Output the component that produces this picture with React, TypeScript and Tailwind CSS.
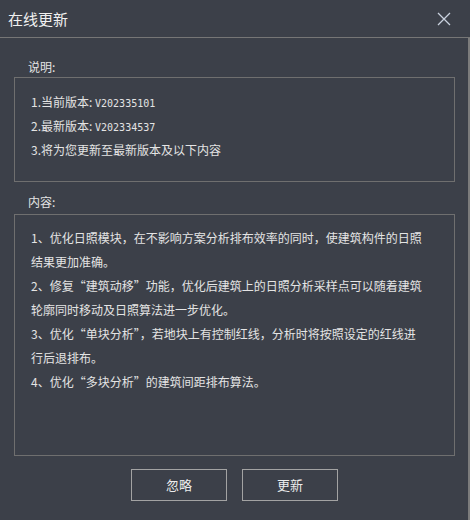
import React from "react";

const contentLines = [
  "1、优化日照模块，在不影响方案分析排布效率的同时，使建筑构件的日照",
  "结果更加准确。",
  "2、修复“建筑动移”功能，优化后建筑上的日照分析采样点可以随着建筑",
  "轮廓同时移动及日照算法进一步优化。",
  "3、优化“单块分析”，若地块上有控制红线，分析时将按照设定的红线进",
  "行后退排布。",
  "4、优化“多块分析”的建筑间距排布算法。",
];

function Mono({ children }: { children: React.ReactNode }) {
  return <span className="font-['DejaVu_Sans_Mono',monospace] text-[10px] leading-none">{children}</span>;
}

export default function App() {
  return (
    <div className="w-[470px] h-[520px] bg-[#3c4049] flex flex-col font-['Noto_Sans_CJK_SC',sans-serif] text-[#e4e4e4] overflow-hidden">
      <div className="h-[38px] shrink-0 border-b border-[#767676] flex items-center justify-between pl-[8px] pr-[19px]">
        <span className="text-[15px] leading-none text-[#f0f0f0]">在线更新</span>
        <svg width="14" height="14" viewBox="0 0 14 14" className="text-[#c9d1de]">
          <path d="M1 1 L13 13 M13 1 L1 13" stroke="currentColor" strokeWidth="1.3" fill="none" />
        </svg>
      </div>
      <div className="flex-1 flex flex-col pl-[14px] pr-[13px] border-r-2 border-[#7c7c7c]">
        <div className="mt-[19px] h-[20px] leading-[20px] pl-[14px] text-[12px]">说明:</div>
        <div className="h-[105px] border border-[#6f6f6f] pt-[12px] pl-[16px] text-[12px] leading-[24px]">
          <div className="h-[24px]">1.当前版本: <Mono>V202335101</Mono></div>
          <div className="h-[24px]">2.最新版本: <Mono>V202334537</Mono></div>
          <div className="h-[24px]">3.将为您更新至最新版本及以下内容</div>
        </div>
        <div className="mt-[10px] h-[20px] leading-[20px] pl-[14px] text-[12px]">内容:</div>
        <div className="mt-[2px] h-[242px] border border-[#6f6f6f] pt-[11px] pl-[16px] text-[12px] leading-[24px]">
          {contentLines.map((l, i) => (
            <div key={i} className="whitespace-nowrap h-[24px]">{l}</div>
          ))}
        </div>
        <div className="mt-[13px] flex justify-center gap-[15px]">
          <button className="w-[96px] h-[32px] border border-[#a3a3a3] text-[13px] text-[#ececec] bg-transparent">忽略</button>
          <button className="w-[96px] h-[32px] border border-[#a3a3a3] text-[13px] text-[#ececec] bg-transparent">更新</button>
        </div>
      </div>
    </div>
  );
}
